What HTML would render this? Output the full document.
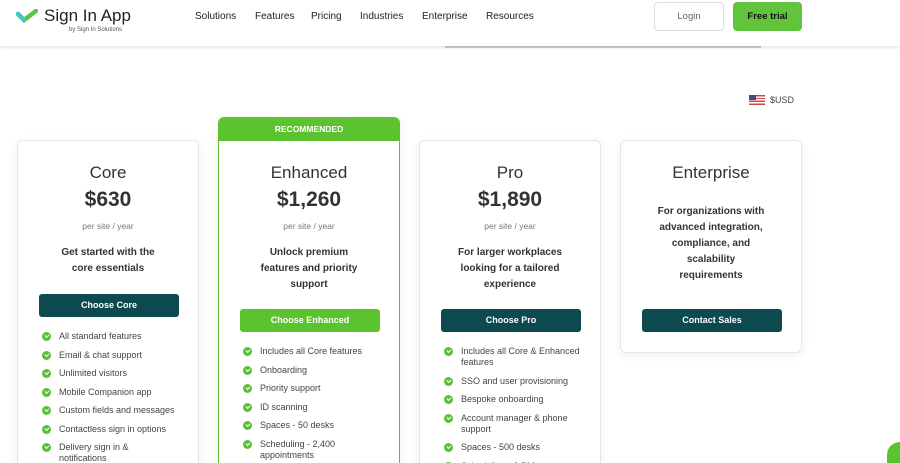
<!DOCTYPE html>
<html><head><meta charset="utf-8"><style>
*{margin:0;padding:0;box-sizing:border-box}
html,body{width:900px;height:463px;overflow:hidden}
body{background:#fff;font-family:"Liberation Sans",sans-serif;color:#333;position:relative}
.hdr{position:absolute;left:0;top:0;width:900px;height:46px;background:#fff;box-shadow:0 1px 3px rgba(0,0,0,.15);z-index:2}
.nav a{position:absolute;top:11px;font-size:10px;color:#222}
.card{position:absolute;top:140px;width:182px;background:#fff;border:1px solid #e6e6e6;border-radius:6px;box-shadow:0 2px 10px rgba(0,0,0,.07);text-align:center;overflow:hidden}
.t{position:absolute;left:0;right:0;top:22px;font-size:17px;color:#333}
.p{position:absolute;left:0;right:0;top:47px;font-size:21px;font-weight:bold;color:#333}
.ps{position:absolute;left:0;right:0;top:80px;font-size:8.5px;color:#777}
.d{position:absolute;left:34px;right:34px;top:104px;font-size:10px;font-weight:bold;line-height:16px;color:#333}
.b{position:absolute;left:21px;width:140px;height:23px;border-radius:3px;color:#fff;font-size:9px;font-weight:bold;line-height:23px;background:#0d4a50}
ul{position:absolute;left:24px;right:22px;list-style:none;text-align:left}
li{position:relative;padding-left:17px;font-size:9px;color:#444;line-height:11px;margin-bottom:7.5px}
li:before{content:"";position:absolute;left:0;top:1px;width:9px;height:9px;border-radius:50%;background:#5cbf38}
li:after{content:"";position:absolute;left:2.5px;top:3px;width:3px;height:2px;border-left:1.3px solid #fff;border-bottom:1.3px solid #fff;transform:rotate(-45deg)}
</style></head><body>
<div class="hdr">
<svg style="position:absolute;left:16px;top:9px" width="22" height="14" viewBox="0 0 22 14"><path d="M2 5 L8 11 L20 2" stroke="#5cc63b" stroke-width="4.5" fill="none" stroke-linecap="round"/><path d="M2 5 L8 11" stroke="#3cc9c0" stroke-width="4.5" fill="none" stroke-linecap="round"/></svg>
<div style="position:absolute;left:44px;top:6px;font-size:17px;color:#222">Sign In App</div>
<div style="position:absolute;left:69px;top:27px;font-size:6px;color:#555">by Sign In Solutions</div>
<div class="nav"><a style="left:195px">Solutions</a><a style="left:255px">Features</a><a style="left:311px">Pricing</a><a style="left:360px">Industries</a><a style="left:422px">Enterprise</a><a style="left:486px">Resources</a></div>
<div style="position:absolute;left:654px;top:2px;width:70px;height:29px;border:1px solid #ddd;border-radius:4px;font-size:9.5px;color:#666;text-align:center;line-height:27px">Login</div>
<div style="position:absolute;left:733px;top:2px;width:69px;height:29px;background:#62c43d;border-radius:4px;font-size:9.5px;font-weight:bold;color:#111;text-align:center;line-height:29px">Free trial</div>
</div>
<div style="position:absolute;left:445px;top:46px;width:316px;height:2px;background:#ccc"></div>
<div style="position:absolute;left:749px;top:95px;width:16px;height:10px;background:repeating-linear-gradient(#c44 0 1.4px,#fff 1.4px 2.8px)"><div style="width:7px;height:5px;background:#3b4a8c"></div></div>
<div style="position:absolute;left:770px;top:95px;font-size:9px;color:#444">$USD</div>

<div class="card" style="left:17px;height:323px;border-bottom:none;border-radius:6px 6px 0 0">
<div class="t">Core</div><div class="p">$630</div><div class="ps">per site / year</div>
<div class="d">Get started with the core essentials</div>
<div class="b" style="top:153px">Choose Core</div>
<ul style="top:190px"><li>All standard features</li><li>Email &amp; chat support</li><li>Unlimited visitors</li><li>Mobile Companion app</li><li>Custom fields and messages</li><li>Contactless sign in options</li><li>Delivery sign in &amp; notifications</li></ul>
</div>

<div class="card" style="left:218px;top:117px;height:346px;border-color:#5cc22f;border-bottom:none;border-radius:6px 6px 0 0">
<div style="height:23px;background:#5cc22f;color:#fff;font-size:8.5px;font-weight:bold;line-height:23px">RECOMMENDED</div>
<div style="position:absolute;left:0;right:0;top:23px;bottom:0">
<div class="t">Enhanced</div><div class="p">$1,260</div><div class="ps">per site / year</div>
<div class="d" style="left:40px;right:40px">Unlock premium features and priority support</div>
<div class="b" style="top:168px;background:#5cc22f">Choose Enhanced</div>
<ul style="top:205px;right:14px"><li>Includes all Core features</li><li>Onboarding</li><li>Priority support</li><li>ID scanning</li><li>Spaces - 50 desks</li><li style="padding-right:30px">Scheduling - 2,400 appointments</li></ul>
</div></div>

<div class="card" style="left:419px;height:323px;border-bottom:none;border-radius:6px 6px 0 0">
<div class="t">Pro</div><div class="p">$1,890</div><div class="ps">per site / year</div>
<div class="d" style="left:34px;right:34px">For larger workplaces looking for a tailored experience</div>
<div class="b" style="top:168px">Choose Pro</div>
<ul style="top:205px;right:10px"><li>Includes all Core &amp; Enhanced features</li><li>SSO and user provisioning</li><li>Bespoke onboarding</li><li style="padding-right:20px">Account manager &amp; phone support</li><li>Spaces - 500 desks</li><li>Scheduling - 2,500</li></ul>
</div>

<div class="card" style="left:620px;height:213px">
<div class="t">Enterprise</div>
<div class="d" style="top:63px;left:36px;right:36px">For organizations with advanced integration, compliance, and scalability requirements</div>
<div class="b" style="top:168px">Contact Sales</div>
</div>
<div style="position:absolute;left:887px;top:442px;width:13px;height:21px;border-radius:15px 0 0 0;background:#5cc22f"></div>
</body></html>
